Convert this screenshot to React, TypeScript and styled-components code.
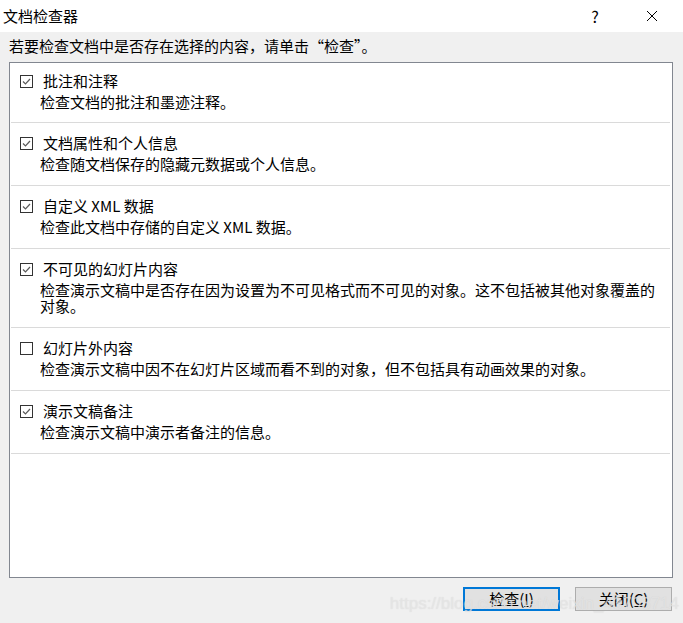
import React, { FC } from 'react';
import styled, { createGlobalStyle } from 'styled-components';

const GlobalStyle = createGlobalStyle`
  html, body {
    margin: 0;
    padding: 0;
    background: #f0f0f0;
  }
  body {
    font-family: "Noto Sans CJK SC", "Microsoft YaHei", sans-serif;
    font-size: 15px;
    color: #000000;
  }
`;

const Dialog = styled.div`
  box-sizing: border-box;
  display: flex;
  flex-direction: column;
  height: 623px;
  position: relative;
  width: 683px;
  overflow: hidden;
`;

const TitleBar = styled.div`
  align-items: center;
  background: #ffffff;
  display: flex;
  gap: 24px;
  height: 32px;
  padding: 0 8px 0 3px;
`;

const Title = styled.span`
  flex: 1;
  font-size: 15px;
  line-height: 20px;
`;

const TitleButton = styled.span<{ $w: number }>`
  align-items: center;
  display: flex;
  font-size: 16px;
  height: 32px;
  justify-content: center;
  width: ${({ $w }) => $w}px;
`;

const Body = styled.div`
  display: flex;
  flex: 1;
  flex-direction: column;
  padding: 0 10px 0 9px;
`;

const Prompt = styled.div`
  height: 30px;
  line-height: 28px;
  white-space: nowrap;
`;

const Panel = styled.div`
  background: #ffffff;
  border: 1px solid #828790;
  display: flex;
  flex-direction: column;
  height: 514px;
`;

const Row = styled.div`
  border-bottom: 1px solid #dadada;
  margin: 0 2px 0 1px;
  padding: 10px 0 13px 0;

  &:first-child {
    padding-top: 8px;
    padding-bottom: 12px;
  }
`;

const RowHead = styled.div`
  align-items: center;
  display: flex;
  height: 20px;
  padding-left: 9px;
`;

const Box = styled.span`
  border: 1px solid #333333;
  box-sizing: border-box;
  display: inline-flex;
  height: 13px;
  margin-right: 10px;
  width: 13px;
`;

const Label = styled.span`
  line-height: 20px;
  white-space: nowrap;
`;

const Desc = styled.div`
  line-height: 16px;
  margin-top: 3px;
  padding: 0 8px 0 29px;
`;

const Footer = styled.div`
  display: flex;
  gap: 15px;
  justify-content: flex-end;
  padding: 9px 1px 0 0;
`;

const Button = styled.button<{ $default?: boolean }>`
  background: #e1e1e1;
  border: ${({ $default }) =>
    $default ? '2px solid #0078d7' : '1px solid #adadad'};
  box-sizing: border-box;
  color: #000000;
  font-family: inherit;
  font-size: 15px;
  height: 24px;
  line-height: 18px;
  padding: 0;
  width: 97px;
`;

const Watermark = styled.div`
  bottom: 9px;
  color: rgba(232, 232, 232, 0.7);
  font-family: "Liberation Sans", Arial, sans-serif;
  font-size: 17px;
  pointer-events: none;
  position: absolute;
  right: 4px;
  text-shadow: 0 0 1px rgba(170, 170, 170, 0.3);
`;

const Check: FC<{ checked: boolean }> = ({ checked }) => (
  <Box>
    {checked && (
      <svg width="11" height="11" viewBox="0 0 11 11">
        <polyline
          points="2,5.5 4.5,8 9,3"
          fill="none"
          stroke="#5a5a5a"
          strokeWidth="1.2"
        />
      </svg>
    )}
  </Box>
);

const items = [
  { checked: true, label: '批注和注释', desc: '检查文档的批注和墨迹注释。' },
  {
    checked: true,
    label: '文档属性和个人信息',
    desc: '检查随文档保存的隐藏元数据或个人信息。',
  },
  {
    checked: true,
    label: '自定义 XML 数据',
    desc: '检查此文档中存储的自定义 XML 数据。',
  },
  {
    checked: true,
    label: '不可见的幻灯片内容',
    desc: '检查演示文稿中是否存在因为设置为不可见格式而不可见的对象。这不包括被其他对象覆盖的对象。',
  },
  {
    checked: false,
    label: '幻灯片外内容',
    desc: '检查演示文稿中因不在幻灯片区域而看不到的对象，但不包括具有动画效果的对象。',
  },
  {
    checked: true,
    label: '演示文稿备注',
    desc: '检查演示文稿中演示者备注的信息。',
  },
];

const App: FC = () => (
  <>
    <GlobalStyle />
    <Dialog>
      <TitleBar>
        <Title>文档检查器</Title>
        <TitleButton $w={20}>?</TitleButton>
        <TitleButton $w={46}>
          <svg width="12" height="12" viewBox="0 0 12 12">
            <path d="M1 1 L11 11 M11 1 L1 11" stroke="#000" strokeWidth="1" />
          </svg>
        </TitleButton>
      </TitleBar>
      <Body>
        <Prompt>若要检查文档中是否存在选择的内容，请单击“检查”。</Prompt>
        <Panel>
          {items.map((it) => (
            <Row key={it.label}>
              <RowHead>
                <Check checked={it.checked} />
                <Label>{it.label}</Label>
              </RowHead>
              <Desc>{it.desc}</Desc>
            </Row>
          ))}
        </Panel>
        <Footer>
          <Button $default>
            检查(<u>I</u>)
          </Button>
          <Button>
            关闭(<u>C</u>)
          </Button>
        </Footer>
      </Body>
      <Watermark>https://blog.csdn.net/weixin_43703714</Watermark>
    </Dialog>
  </>
);

export default App;
